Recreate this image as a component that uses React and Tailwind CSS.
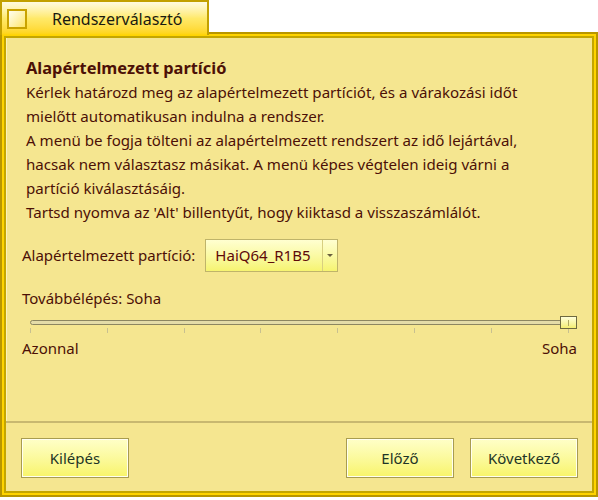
const ticks = [0, 1, 2, 3, 4, 5, 6, 7];

const Btn = ({ label }) => (
  <button className="w-[108px] h-[40px] border border-[#a89c50] bg-gradient-to-b from-[#ffffc8] to-[#f8f468] text-[15px] text-[#1e3526] shadow-[inset_0_0_0_1px_#fffff0]">
    {label}
  </button>
);

const App = () => {
  return (
    <div className="w-[598px] h-[500px] bg-white relative font-['Noto_Sans',sans-serif] text-[#4c1006]">
      {/* -------------------tab-------------------- */}
      <div className="relative z-10 w-[209px] h-[35px] border-t-[2px] border-l-[2px] border-r-[2px] border-[#c2a000] bg-gradient-to-b from-[#fffbe0] via-[#ffe968] to-[#ffd400] flex items-center">
        <span className="ml-[5px] w-[20px] h-[20px] border-[2px] border-[#c9a200] bg-gradient-to-br from-[#fffef0] to-[#ffe560]" />
        <span className="ml-[25px] text-[16px] text-[#1a1a10]">Rendszerválasztó</span>
      </div>

      {/* -------------------frame-------------------- */}
      <div className="mt-[-3px] h-[465px] border-[2px] border-[#b89600] bg-[#ffd400] p-[2px]">
        <div className="h-full border-[2px] border-[#c4a600] bg-[#f5e690] flex flex-col">
          <div className="flex-1 border-l border-[#fbf2b8]">
            {/* ---text--- */}
            <div className="pt-[18px] pl-[19px] text-[15.1px] leading-[24px]">
              <h2 className="font-bold text-[16.4px]">Alapértelmezett partíció</h2>
              <p>
                Kérlek határozd meg az alapértelmezett partíciót, és a várakozási időt
                <br />
                mielőtt automatikusan indulna a rendszer.
                <br />
                A menü be fogja tölteni az alapértelmezett rendszert az idő lejártával,
                <br />
                hacsak nem választasz másikat. A menü képes végtelen ideig várni a
                <br />
                partíció kiválasztásáig.
                <br />
                Tartsd nyomva az 'Alt' billentyűt, hogy kiiktasd a visszaszámlálót.
              </p>
            </div>

            {/* ---default partition--- */}
            <div className="mt-[15px] pl-[15px] flex items-center gap-[10px] text-[15px]">
              <span>Alapértelmezett partíció:</span>
              <div className="flex h-[33px] w-[133px] border border-[#bfb46a] bg-gradient-to-b from-[#ffffd0] to-[#f6f470]">
                <span className="flex-1 flex items-center pl-[9px] text-[#5e0a0a]">HaiQ64_R1B5</span>
                <span className="w-[15px] border-l border-[#d8cf80] flex items-center justify-center">
                  <span className="w-0 h-0 border-l-[3px] border-r-[3px] border-t-[3px] border-l-transparent border-r-transparent border-t-[#6a6040]" />
                </span>
              </div>
            </div>

            {/* ---timeout--- */}
            <div className="mt-[14px] pl-[15px] pr-[15px] text-[15px] leading-[24px]">
              <p>Továbbélépés: Soha</p>
              <div className="relative h-[26px] ml-[8px]">
                <div className="absolute left-0 right-[2px] top-[10px] h-[5px] rounded-full border border-[#8c8660] bg-[#e4dca8]" />
                {ticks.map((t) => (
                  <span
                    key={t}
                    className="absolute top-[18px] w-px h-[5px] bg-[#c8c090]"
                    style={{ left: `${t * 76.8}px` }}
                  />
                ))}
                <div className="absolute right-0 top-[6px] w-[17px] h-[13px] border border-[#6e6a40] bg-gradient-to-b from-[#ffffd8] to-[#f4ee70] flex justify-center">
                  <span className="mt-[3px] w-px h-[6px] bg-[#b0a860]" />
                </div>
              </div>
              <div className="flex justify-between">
                <span>Azonnal</span>
                <span>Soha</span>
              </div>
            </div>
          </div>

          {/* ---buttons--- */}
          <div className="h-[70px] border-t-[2px] border-[#c8b870] flex items-center pl-[15px] pr-[14px] pt-[2px]">
            <Btn label="Kilépés" />
            <div className="flex-1" />
            <Btn label="Előző" />
            <div className="w-[16px]" />
            <Btn label="Következő" />
          </div>
        </div>
      </div>
    </div>
  );
};

export default App;
